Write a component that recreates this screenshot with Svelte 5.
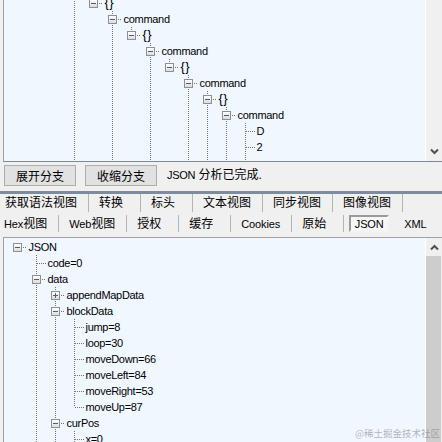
<script>
  const top = [
    { lines: [3], node: 4, box: 'minus', up: true, text: '{}', cls: 'brace' },
    { lines: [3], node: 5, box: 'minus', up: true, down: true, text: 'command' },
    { lines: [3, 5], node: 6, box: 'minus', up: true, text: '{}', cls: 'brace' },
    { lines: [3, 5], node: 7, box: 'minus', up: true, down: true, text: 'command' },
    { lines: [3, 5, 7], node: 8, box: 'minus', up: true, text: '{}', cls: 'brace' },
    { lines: [3, 5, 7], node: 9, box: 'minus', up: true, down: true, text: 'command' },
    { lines: [3, 5, 7, 9], node: 10, box: 'minus', up: true, down: true, text: '{}', cls: 'brace' },
    { lines: [3, 5, 7, 9, 10], node: 11, box: 'minus', up: true, down: true, text: 'command' },
    { lines: [3, 5, 7, 9, 10, 11], node: 12, tick: true, up: true, down: true, text: 'D' },
    { lines: [3, 5, 7, 9, 10, 11], node: 12, tick: true, up: true, down: true, text: '2' },
    { lines: [3, 5, 7, 9, 10, 11], node: 12, tick: true, up: true, down: true, text: '.' }
  ];
  const bottom = [
    { lines: [], node: 0, box: 'minus', text: 'JSON' },
    { lines: [], node: 1, tick: true, up: true, down: true, text: 'code=0' },
    { lines: [], node: 1, box: 'minus', up: true, down: true, text: 'data' },
    { lines: [1], node: 2, box: 'plus', up: true, down: true, text: 'appendMapData' },
    { lines: [1], node: 2, box: 'minus', up: true, down: true, text: 'blockData' },
    { lines: [1, 2], node: 3, tick: true, up: true, down: true, text: 'jump=8' },
    { lines: [1, 2], node: 3, tick: true, up: true, down: true, text: 'loop=30' },
    { lines: [1, 2], node: 3, tick: true, up: true, down: true, text: 'moveDown=66' },
    { lines: [1, 2], node: 3, tick: true, up: true, down: true, text: 'moveLeft=84' },
    { lines: [1, 2], node: 3, tick: true, up: true, down: true, text: 'moveRight=53' },
    { lines: [1, 2], node: 3, tick: true, up: true, text: 'moveUp=87' },
    { lines: [1], node: 2, box: 'minus', up: true, down: true, text: 'curPos' },
    { lines: [1, 2], node: 3, tick: true, up: true, down: true, text: 'x=0' }
  ];
  const tabs1 = ['获取语法视图', '转换', '标头', '文本视图', '同步视图', '图像视图'];
  const tabs2 = [
    { lat: 'Hex', cjk: '视图' },
    { lat: 'Web', cjk: '视图' },
    { cjk: '授权' },
    { cjk: '缓存' },
    { lat: 'Cookies' },
    { cjk: '原始' },
    { lat: 'JSON', active: true },
    { lat: 'XML' }
  ];
  const range = (n) => Array.from({ length: n }, (_, i) => i);
</script>

{#snippet tree(rows)}
  {#each rows as r}
    <div class="row">
      {#each range(r.node) as c}
        <span class="cell" class:pass={r.lines.includes(c)}></span>
      {/each}
      <span class="cell node" class:up={r.up} class:down={r.down} class:tick={r.tick} class:link={r.box}>
        {#if r.box}
          <span class="box">
            <span class="dash"></span>
            {#if r.box === 'plus'}<span class="bar"></span>{/if}
          </span>
        {/if}
      </span>
      <span class="label" class:brace={r.cls}>{r.text}</span>
    </div>
  {/each}
{/snippet}

{#snippet chevron(up)}
  <svg class="chev" width="9" height="7" viewBox="0 0 9 7">
    <path d={up ? 'M1 5.5 L4.5 2 L8 5.5' : 'M1 1.5 L4.5 5 L8 1.5'} fill="none" stroke="#505050" stroke-width="2" />
  </svg>
{/snippet}

<div class="app">
  <section class="pane top">
    <div class="tree scrolled">{@render tree(top)}</div>
    <div class="scrollbar end">{@render chevron(false)}</div>
  </section>

  <div class="actions">
    <button>展开分支</button>
    <button>收缩分支</button>
    <span class="status"><span class="lat">JSON</span> 分析已完成.</span>
  </div>

  <div class="splitter"></div>

  <nav class="tabs first">
    {#each tabs1 as t}<span class="tab">{t}</span>{/each}
  </nav>
  <nav class="tabs second">
    {#each tabs2 as t}
      <span class="tab" class:active={t.active}>{#if t.lat}<span class="lat">{t.lat}</span>{/if}{t.cjk ?? ''}</span>
    {/each}
  </nav>

  <section class="pane bottom">
    <div class="tree">{@render tree(bottom)}</div>
    <div class="scrollbar">
      <div class="arrow">{@render chevron(true)}</div>
      <div class="thumb"></div>
    </div>
    <span class="mark">@稀土掘金技术社区</span>
  </section>
</div>

<style>
  :global(body) { margin: 0; background: #f0f0f0; }
  .app {
    width: 442px;
    height: 442px;
    overflow: hidden;
    display: flex;
    flex-direction: column;
    background: #f0f0f0;
    font-family: "Liberation Sans", "Noto Sans CJK SC", sans-serif;
    font-size: 11px;
    color: #000;
    padding-left: 3px;
    box-sizing: border-box;
  }
  .pane { display: flex; position: relative; overflow: hidden; border-left: 1px solid #a0a0a0; }
  .pane.top { height: 161px; flex: none; border-bottom: 1px solid #828790; }
  .pane.bottom { flex: 1; min-height: 0; border-top: 1px solid #a0a4a8; margin-top: 5px; }
  .tree {
    flex: 1;
    background: #f0f7ff;
    border-right: 1px solid #fff;
    padding: 1px 0 0 4px;
    overflow: hidden;
  }
  .scrolled { padding-top: 0; }
  .scrolled > :first-child { margin-top: -5px; }
  .row { display: flex; height: 16px; line-height: 16px; white-space: nowrap; }
  .cell { flex: none; width: 19px; height: 16px; display: block; box-sizing: border-box; padding: 4px 0 0 5px; }
  .pass, .node.up.down {
    background: repeating-linear-gradient(to bottom, #70757c 0 1px, transparent 1px 2px) 9px 0 / 1px 16px no-repeat;
  }
  .node.up:not(.down) {
    background: repeating-linear-gradient(to bottom, #70757c 0 1px, transparent 1px 2px) 9px 0 / 1px 8px no-repeat;
  }
  .tick::after, .link::after {
    content: "";
    display: block;
    height: 1px;
    background: repeating-linear-gradient(to right, #70757c 0 1px, transparent 1px 2px);
  }
  .tick::after { margin: 4px -1px 0 5px; }
  .link { display: flex; }
  .link::after { flex: 1; margin: 4px 1px 0 1px; }
  .box {
    flex: none;
    width: 9px;
    height: 9px;
    box-sizing: border-box;
    border: 1px solid #8f8f8f;
    background: linear-gradient(#ffffff, #dcdcdc);
    display: grid;
    place-items: center;
  }
  .dash, .bar { grid-area: 1 / 1; background: #4c5a86; display: block; }
  .dash { width: 5px; height: 1px; }
  .bar { width: 1px; height: 5px; }
  .label { padding-left: 1.5px; letter-spacing: -0.3px; color: #000; }
  .brace { font-size: 13px; letter-spacing: 0.5px; }
  .scrollbar { flex: none; width: 16px; background: #f0f0f0; display: flex; flex-direction: column; }
  .scrollbar.end { justify-content: flex-end; align-items: center; padding-bottom: 6px; box-sizing: border-box; }
  .arrow { height: 18px; display: flex; align-items: center; justify-content: center; }
  .thumb { flex: 1; background: #cdcdcd; margin-right: 1px; }
  .chev { display: block; }
  .actions { flex: none; height: 29px; display: flex; align-items: flex-start; padding: 3px 0 0 1px; box-sizing: border-box; }
  button {
    width: 72px;
    height: 21px;
    padding: 0;
    margin-right: 9px;
    background: #e1e1e1;
    border: 1px solid #adadad;
    border-radius: 0;
    font: 12px "Noto Sans CJK SC", sans-serif;
    color: #000;
  }
  .status { margin-left: 1px; line-height: 21px; font-size: 12px; }
  .lat { font-size: 11px; letter-spacing: -0.3px; }
  .tabs .lat { letter-spacing: -0.12px; }
  .splitter { flex: none; height: 3px; background: #7d8c9c; margin-left: -3px; }
  .tabs { display: flex; flex: none; font-size: 12px; }
  .tabs.first { height: 18px; line-height: 19px; padding-left: 1px; }
  .tabs.second { height: 17px; margin-top: 3px; line-height: 18px; }
  .tab {
    box-sizing: border-box;
    min-width: 52px;
    padding: 0 11px 0 10px;
    border-right: 1px solid #b4b4b4;
  }
  .tabs .tab:first-child { padding-left: 1px; min-width: 0; }
  .tabs.second .tab:last-child { border-right: none; min-width: 0; }
  .tabs.second .tab.active {
    width: 40px;
    min-width: 0;
    padding: 0;
    margin: 0 5px;
    border: 2px solid #9a9a9a;
    border-right-color: #f4f4f4;
    border-bottom-color: #f4f4f4;
    background: #f7f7f7;
    text-align: center;
    line-height: 15px;
  }
  .mark {
    position: absolute;
    right: 2px;
    bottom: 3px;
    font-size: 9.5px;
    line-height: 11px;
    color: rgba(120, 120, 120, 0.55);
    font-family: "Noto Sans CJK SC", sans-serif;
  }
</style>
